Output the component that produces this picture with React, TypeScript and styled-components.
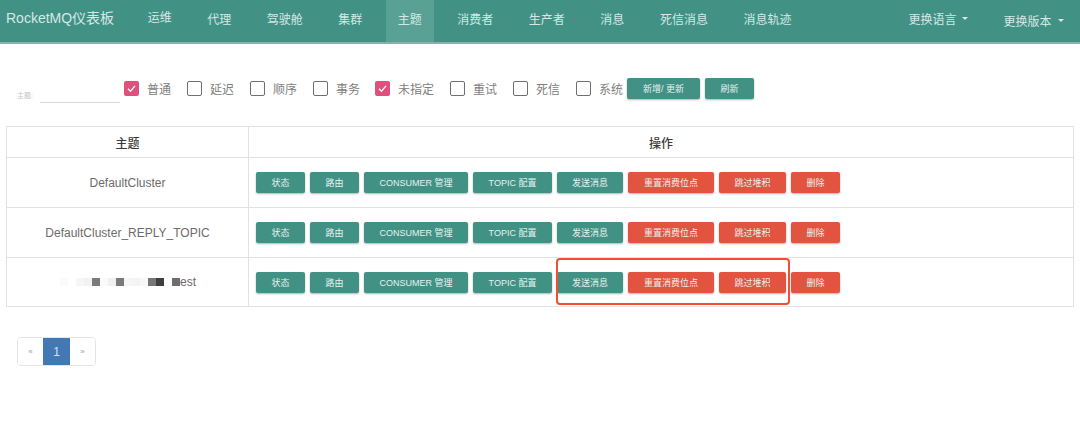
import styled, { createGlobalStyle } from 'styled-components';

const navItems = ['运维', '代理', '驾驶舱', '集群', '主题', '消费者', '生产者', '消息', '死信消息', '消息轨迹'];
const filters = [
  { label: '普通', checked: true, width: 63 },
  { label: '延迟', checked: false, width: 63 },
  { label: '顺序', checked: false, width: 63 },
  { label: '事务', checked: false, width: 62 },
  { label: '未指定', checked: true, width: 75 },
  { label: '重试', checked: false, width: 63 },
  { label: '死信', checked: false, width: 63 },
  { label: '系统', checked: false, width: 51 },
];
const mosaic = [
  '#fbfbfb', '#ffffff', '#f6f6f6', '#f2f2f2', '#7a7a7a', '#fafafa', '#f0f0f0', '#7a7a7a',
  '#f6f6f6', '#f4f4f4', '#f8f8f8', '#777777', '#3f3f3f', '#ffffff', '#6e6e6e',
];

const GlobalStyle = createGlobalStyle`
  html, body {
    margin: 0;
    background: #fff;
    font-family: "Liberation Sans", "Noto Sans CJK SC", sans-serif;
    color: #555;
  }
`;

const Navbar = styled.nav`
  display: flex;
  align-items: stretch;
  height: 42px;
  padding: 0 11px 0 6px;
  background: #419285;
  border-bottom: 2px solid #7fb5ab;
  color: #d5e8e4;
  font-size: 12px;
`;

const Brand = styled.div`
  width: 124px;
  font-size: 14px;
  line-height: 36px;
`;

const NavItem = styled.div<{ $active?: boolean; $raised?: boolean }>`
  margin: 0 5.75px;
  padding: 0 12px;
  line-height: ${(p) => (p.$raised ? 36 : 40)}px;
  white-space: nowrap;
  background: ${(p) => (p.$active ? '#5aa195' : 'transparent')};
`;

const NavRight = styled.div`
  display: flex;
  margin-left: auto;
  gap: 35px;
  padding-right: 5.5px;
`;

const Dropdown = styled.div<{ $raised?: boolean }>`
  display: flex;
  align-items: center;
  gap: 6px;
  height: ${(p) => (p.$raised ? 36 : 40)}px;
`;

const Caret = styled.i`
  width: 0;
  height: 0;
  border-top: 3px solid currentColor;
  border-left: 3px solid transparent;
  border-right: 3px solid transparent;
`;

const FilterBar = styled.div`
  display: flex;
  align-items: flex-start;
  height: 83px;
  padding: 34px 0 0 17px;
  box-sizing: border-box;
`;

const TopicField = styled.label`
  display: flex;
  align-items: flex-end;
  height: 25px;
  width: 107px;
  font-size: 7px;
  color: #c4c4c4;
`;

const TopicLabel = styled.span`
  width: 23px;
  line-height: 15px;
`;

const TopicLine = styled.span`
  width: 80px;
  border-bottom: 1px solid #d8d8d8;
`;

const Filter = styled.label<{ $w: number }>`
  display: flex;
  align-items: center;
  gap: 8px;
  width: ${(p) => p.$w}px;
  height: 21px;
  font-size: 12px;
  color: #808080;
  white-space: nowrap;
`;

const Box = styled.span<{ $checked: boolean }>`
  display: flex;
  align-items: center;
  justify-content: center;
  flex: none;
  width: 15px;
  height: 15px;
  box-sizing: border-box;
  border-radius: 2px;
  border: ${(p) => (p.$checked ? 'none' : '1.5px solid #6f6f6f')};
  background: ${(p) => (p.$checked ? '#e0507c' : '#fff')};
`;

const Btn = styled.button<{ $danger?: boolean; $w: number }>`
  flex: none;
  width: ${(p) => p.$w}px;
  height: 21px;
  padding: 0;
  border: 0;
  border-radius: 2px;
  background: ${(p) => (p.$danger ? '#e25340' : '#419285')};
  color: #e4f1ee;
  font-family: inherit;
  font-size: 9px;
  box-shadow: 0 1px 2px rgba(0, 0, 0, 0.3);
`;

const FilterButtons = styled.div`
  display: flex;
  gap: 5px;
`;

const Table = styled.table`
  width: 1068px;
  margin: -1px 6px 0;
  border-collapse: collapse;
  table-layout: fixed;
  font-size: 12px;
  border: 1px solid #e2e2e2;
`;

const Th = styled.th`
  height: 30px;
  padding: 0;
  border: 1px solid #e2e2e2;
  color: #3a3a3a;
  font-size: 12px;
  font-weight: 500;
`;

const Td = styled.td`
  height: 49px;
  padding: 0;
  border: 1px solid #e2e2e2;
  text-align: center;
  color: #6c6c6c;
`;

const LastTd = styled(Td)`
  height: 48px;
`;

const Actions = styled.div`
  position: relative;
  display: flex;
  gap: 5px;
  padding-left: 7px;
`;

const Highlight = styled.div`
  position: absolute;
  left: 307px;
  top: -14px;
  width: 234px;
  height: 47px;
  box-sizing: border-box;
  border: 2px solid #ee4f35;
  border-radius: 4px;
`;

const Masked = styled.div`
  display: flex;
  align-items: center;
  justify-content: center;
  padding-left: 1px;
`;

const Pixel = styled.i<{ $c: string }>`
  width: 8px;
  height: 8px;
  background: ${(p) => p.$c};
`;

const Pager = styled.div`
  display: inline-flex;
  height: 27px;
  margin: 30px 0 0 17px;
  border: 1px solid #e4e4e4;
  border-radius: 4px;
  overflow: hidden;
`;

const PageCell = styled.span<{ $active?: boolean }>`
  display: flex;
  align-items: center;
  justify-content: center;
  width: ${(p) => (p.$active ? 27 : 25)}px;
  background: ${(p) => (p.$active ? '#4279b5' : '#fff')};
  color: ${(p) => (p.$active ? '#d5e3f1' : '#999')};
  font-size: ${(p) => (p.$active ? 12 : 8)}px;
`;

const RowActions = ({ highlight }: { highlight?: boolean }) => (
  <Actions>
    <Btn $w={49}>状态</Btn>
    <Btn $w={49}>路由</Btn>
    <Btn $w={104}>CONSUMER 管理</Btn>
    <Btn $w={79}>TOPIC 配置</Btn>
    <Btn $w={66}>发送消息</Btn>
    <Btn $w={86} $danger>重置消费位点</Btn>
    <Btn $w={67} $danger>跳过堆积</Btn>
    <Btn $w={49} $danger>删除</Btn>
    {highlight && <Highlight />}
  </Actions>
);

export default function App() {
  return (
    <>
      <GlobalStyle />
      <Navbar>
        <Brand>RocketMQ仪表板</Brand>
        {navItems.map((item, i) => (
          <NavItem key={item} $active={item === '主题'} $raised={i === 0}>
            {item}
          </NavItem>
        ))}
        <NavRight>
          <Dropdown $raised>更换语言<Caret /></Dropdown>
          <Dropdown>更换版本<Caret /></Dropdown>
        </NavRight>
      </Navbar>
      <FilterBar>
        <TopicField>
          <TopicLabel>主题:</TopicLabel>
          <TopicLine />
        </TopicField>
        {filters.map((f) => (
          <Filter key={f.label} $w={f.width}>
            <Box $checked={f.checked}>
              {f.checked && (
                <svg width="11" height="11" viewBox="0 0 11 11" fill="none">
                  <path d="M2 5.8 L4.5 8.2 L9 2.8" stroke="#fff" strokeWidth="1.3" />
                </svg>
              )}
            </Box>
            {f.label}
          </Filter>
        ))}
        <FilterButtons>
          <Btn $w={73}>新增/ 更新</Btn>
          <Btn $w={49}>刷新</Btn>
        </FilterButtons>
      </FilterBar>
      <Table>
        <colgroup>
          <col width="242" />
          <col />
        </colgroup>
        <thead>
          <tr>
            <Th>主题</Th>
            <Th>操作</Th>
          </tr>
        </thead>
        <tbody>
          <tr>
            <Td>DefaultCluster</Td>
            <Td><RowActions /></Td>
          </tr>
          <tr>
            <Td>DefaultCluster_REPLY_TOPIC</Td>
            <Td><RowActions /></Td>
          </tr>
          <tr>
            <LastTd>
              <Masked>
                {mosaic.map((c, i) => (
                  <Pixel key={i} $c={c} />
                ))}
                est
              </Masked>
            </LastTd>
            <LastTd><RowActions highlight /></LastTd>
          </tr>
        </tbody>
      </Table>
      <Pager>
        <PageCell>«</PageCell>
        <PageCell $active>1</PageCell>
        <PageCell>»</PageCell>
      </Pager>
    </>
  );
}
